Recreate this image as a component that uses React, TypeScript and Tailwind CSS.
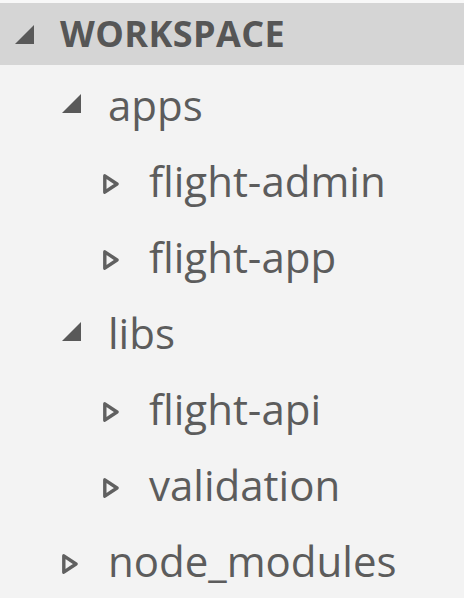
import React from 'react'

type Node = {
  name: string
  level: 1 | 2
  open: boolean
}

const nodes: Node[] = [
  { name: 'apps', level: 1, open: true },
  { name: 'flight-admin', level: 2, open: false },
  { name: 'flight-app', level: 2, open: false },
  { name: 'libs', level: 1, open: true },
  { name: 'flight-api', level: 2, open: false },
  { name: 'validation', level: 2, open: false },
  { name: 'node_modules', level: 1, open: false },
]

const Expanded = ({ size = 19 }: { size?: number }) => (
  <svg width={size} height={size} viewBox="0 0 19 19" className="block">
    <path d="M19 0 L19 19 L0 19 Z" fill="#595959" />
  </svg>
)

const Collapsed = () => (
  <svg width="16" height="20" viewBox="0 0 16 20" className="block mt-[10px]">
    <path d="M1.8 1.8 L14 10 L1.8 18.2 Z" fill="none" stroke="#606060" strokeWidth="3.4" strokeLinejoin="round" />
  </svg>
)

export default function App() {
  return (
    <div className="w-[464px] h-[598px] bg-[#f3f3f3] overflow-hidden font-['Open_Sans',sans-serif]">
      <div className="h-[3px] bg-[#f8f8f8]" />
      <div className="h-[62px] bg-[#d5d5d5] flex items-center pl-[15px]">
        <div className="w-[45px]">
          <Expanded size={19} />
        </div>
        <span className="text-[36px] font-bold text-[#565656] tracking-[0.4px] leading-none">WORKSPACE</span>
      </div>
      <div className="flex flex-col">
        {nodes.map((n) => (
          <div
            key={n.name}
            className={`h-[76px] flex items-center ${n.level === 1 ? 'pl-[62px]' : 'pl-[103px]'}`}
          >
            <div className="w-[46px] flex">
              {n.open ? <Expanded /> : <Collapsed />}
            </div>
            <span className="text-[42px] text-[#5c5c5c] leading-none mt-[3px]">{n.name}</span>
          </div>
        ))}
      </div>
    </div>
  )
}
